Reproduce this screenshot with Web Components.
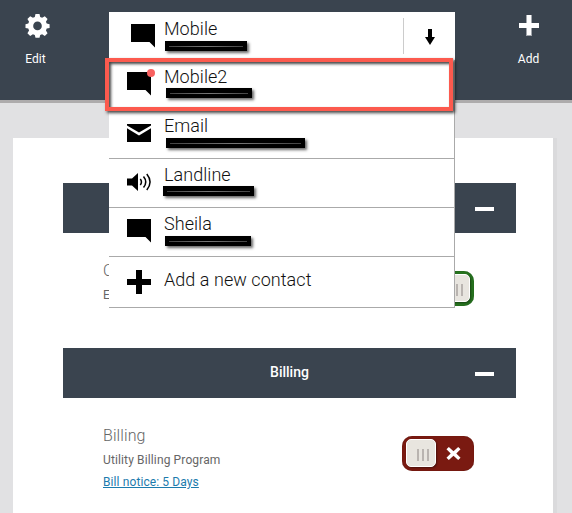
<!DOCTYPE html>
<html lang="en">
<head>
<meta charset="utf-8">
<title>Contacts</title>
<style>
html,body{margin:0;height:513px;overflow:hidden}
body{font-family:Roboto,"Liberation Sans",sans-serif;background:#e1e1e3}
</style>
</head>
<body>
<app-page></app-page>
<script>
const define = (name, html) => customElements.define(name, class extends HTMLElement {
  connectedCallback() {
    if (this.shadowRoot) return;
    const t = document.createElement('template');
    t.innerHTML = typeof html === 'function' ? html(this) : html;
    this.attachShadow({ mode: 'open' }).append(t.content.cloneNode(true));
  }
});

const icons = {
  gear: ['0 0 25 25', '<path fill-rule="evenodd" d="M10.4 0h4.2l.7 3.2 2 .8 2.8-1.7 2.9 2.9-1.7 2.8.8 2 3 .6v3.9l-3 .7-.8 2 1.7 2.8-2.9 2.9-2.8-1.7-2 .8-.7 2.8h-4.2l-.7-2.8-2-.8-2.8 1.7L2 20l1.7-2.8-.8-2-2.9-.7v-3.900l2.900-.6.8-2L2 5.200 4.900 2.300l2.800 1.700 2-.8zM12.500 7.900a4.500 4.500 0 1 0 0 9a4.500 4.500 0 1 0 0-9z"/>'],
  add: ['0 0 20 20', '<path d="M7 0h6v21H7z" fill="#a2a7ad"/><path d="M8 0h4v8h8v5h-8v7H8v-7H0V8h8z"/>'],
  chat: ['0 0 24 24', '<path d="M0 0h24v23.500L18.500 18H0z"/>'],
  mail: ['0 0 24 24', '<path d="M0 3h24v1.500L12 11.500 0 4.500zM0 7.300l12 7.200 12-7.200V21H0z"/>'],
  sound: ['0 0 24 24', '<path d="M0 8.500h5L11 3v18l-6-5.500H0z"/><path d="M13.300 9q2.300 3 0 6M16.500 6.500q4.500 5.500 0 11M19.800 4q6.500 8 0 16" fill="none" stroke="currentColor" stroke-width="1.500"/>'],
  plus: ['0 0 24 24', '<path d="M9 0h6v9h9v6h-9v9H9v-9H0V9h9z"/>'],
  down: ['0 0 10 16', '<path d="M3 0h4v8h3l-5 8-5-8h3z"/>'],
  cross: ['0 0 16 16', '<path d="M3 1l5 4.500L13 1l2.500 2.500L11 8l4.500 4.500L13 15l-5-4.500L3 15 .5 12.500 5 8 .5 3.500z"/>']
};
define('ui-icon', el => {
  const [box, body] = icons[el.getAttribute('name')];
  return `<style>:host{display:block;flex:none}svg{display:block;width:100%;height:100%;overflow:visible;fill:currentColor}</style>
  <svg viewBox="${box}">${body}</svg>`;
});

define('nav-action', `<style>:host{display:flex;flex-direction:column;align-items:center;color:#fff;font-size:12px;line-height:14px}
  ::slotted(span){display:block}</style><slot></slot>`);

define('top-bar', `<style>:host{display:flex;justify-content:space-between;box-sizing:border-box;height:103px;background:#3a444f;border-bottom:3px solid #adabac}
  nav-action{width:71px;padding-top:14px;gap:14px}
  nav-action.r{width:87px;padding-top:15px;gap:17px}
  .gear{width:25px;height:24px;margin-left:3px}.add{width:20px;height:20px}</style>
  <nav-action><ui-icon class="gear" name="gear"></ui-icon><span>Edit</span></nav-action>
  <nav-action class="r"><ui-icon class="add" name="add"></ui-icon><span>Add</span></nav-action>`);

define('section-bar', `<style>:host{display:grid;grid-template-columns:1fr auto 1fr;align-items:center;height:50px;background:#3a444f;color:#fff;font-size:14px;font-weight:500;box-sizing:border-box;padding-right:22px}
  .t{grid-column:2;padding-left:22px;margin-top:-2px}i{grid-column:3;justify-self:end;width:19px;height:4px;background:#fff;margin-top:2px}</style>
  <span class="t"><slot></slot></span><i></i>`);

define('toggle-switch', `<style>:host{display:flex;align-items:center;box-sizing:border-box;width:72px;height:35px;border-radius:10px;background:#7a1a11;padding:3px 13px 4px 4px;justify-content:space-between;box-shadow:inset 0 0 1px #480d08;flex:none}
  :host([on]){background:#27731f;flex-direction:row-reverse;padding:3px 4px 4px 13px;box-shadow:inset 0 0 1px #124b0d}
  .k{box-sizing:border-box;width:30px;height:28px;border-radius:5px;background:#e8e5df;border:1px solid #fff;display:flex;gap:3px;justify-content:center;align-items:center;padding:3px 0 0 4px;box-shadow:1px 1px 2px #0006}
  .k i{width:2px;height:12px;background:#b9b4b0}
  ui-icon{width:15px;height:15px;color:#fff;margin-top:1px}:host([on]) ui-icon{visibility:hidden}</style>
  <span class="k"><i></i><i></i><i></i></span><ui-icon name="cross"></ui-icon>`);

define('program-row', `<style>:host{display:flex;justify-content:space-between;align-items:flex-start;padding:25px 42px 0 40px;height:90px;box-sizing:content-box}
  .x{display:flex;flex-direction:column;color:#666;padding-top:1px}
  ::slotted(b){font-weight:300;font-size:16px;line-height:24px;letter-spacing:.1px}
  ::slotted(span){font-size:12px;line-height:24px;letter-spacing:.13px}
  ::slotted(a){font-size:12px;line-height:20px;letter-spacing:.1px;color:#1c7bad;text-decoration:underline}
  toggle-switch{margin-top:13px}</style>
  <div class="x"><slot></slot></div><slot name="switch"></slot>`);

define('contact-item', el => `<style>:host{display:flex;box-sizing:border-box;height:49px;padding-left:18px;border-bottom:1px solid #aaa;color:#111;background:#fff}
  .i{position:relative;width:24px;height:24px;margin:var(--iy,11px) var(--gap,13px) 0 0;color:#000}
  ui-icon{width:24px;height:24px}
  .dot{position:absolute;left:20px;top:-3px;width:8px;height:8px;border-radius:50%;background:#f8605f}
  .t{padding-top:var(--ty,5px)}
  .n{font-weight:300;font-size:18px;line-height:22px;white-space:nowrap;letter-spacing:var(--ls,.05px)}
  .bar{height:10px;width:${el.getAttribute('bar') || 0}px;margin:var(--by,2px) 0 0 var(--bx,1px);background:linear-gradient(90deg,transparent 4px,#444 4px,#777 50%,#444 calc(100% - 4px),transparent calc(100% - 4px)) 0 5px/100% 1px no-repeat #000;box-shadow:2px 2px 3px #0009}</style>
  <div class="i"><ui-icon name="${el.getAttribute('icon')}"></ui-icon>${el.hasAttribute('dot') ? '<i class="dot"></i>' : ''}</div>
  <div class="t"><div class="n"><slot></slot></div>${el.hasAttribute('bar') ? '<div class="bar"></div>' : ''}</div>`);

define('contact-menu', `<style>:host{position:absolute;left:109px;top:12px;width:346px;height:296px;background:#fff;box-sizing:border-box}
  .head{display:flex;height:48px}
  .head contact-item{flex:1;height:48px;border:0;padding-left:22px;--gap:9px;--iy:12px;--ty:6px;--by:1px}
  .arrow{display:flex;align-items:center;justify-content:center;width:51px;box-sizing:content-box;height:36px;margin-top:6px;border-left:1px solid #ccc}
  .arrow ui-icon{width:10px;height:16px;margin-top:2px}
  .list{border-right:1px solid #aaa}
  .first{border-bottom-color:transparent}
  .ring{position:absolute;left:-4px;top:46px;width:348px;height:53px;box-sizing:border-box;border:4px solid #fc5a4e;box-shadow:2px 2px 3px #000b,inset 2px 2px 3px #000b}</style>
  <div class="head"><contact-item icon="chat" bar="82">Mobile</contact-item><div class="arrow"><ui-icon name="down"></ui-icon></div></div>
  <div class="list">
  <contact-item class="first" icon="chat" dot bar="86" style="--iy:12px;--bx:2px;--ty:6px;--by:0px">Mobile2</contact-item>
  <contact-item style="height:50px;--iy:12px;--ty:6px;--by:1px;--bx:2px" icon="mail" bar="139">Email</contact-item>
  <contact-item style="--iy:11px;--ty:5px;--by:0px;--bx:-1px" icon="sound" bar="91">Landline</contact-item>
  <contact-item style="--iy:11px;--ty:5px;--by:1px;--bx:1px" icon="chat" bar="86">Sheila</contact-item>
  <contact-item style="height:51px;--iy:13px;--ty:12px" icon="plus">Add a new contact</contact-item>
  </div><div class="ring"></div>`);

define('app-page', `<style>:host{display:block;width:572px;height:513px;position:relative;overflow:hidden;background:#e1e1e3}
  main{box-sizing:border-box;margin:35px 15px 0 13px;height:375px;background:#fff;border-right:4px solid #dadadc;padding:45px 37px 0 50px}
  .on,.off{margin-top:13px}</style>
  <top-bar></top-bar>
  <main>
    <section-bar></section-bar>
    <program-row><b>C</b><span>E</span><toggle-switch slot="switch" class="on" on></toggle-switch></program-row>
    <section-bar>Billing</section-bar>
    <program-row><b>Billing</b><span>Utility Billing Program</span><a>Bill notice: 5 Days</a><toggle-switch slot="switch" class="off"></toggle-switch></program-row>
  </main>
  <contact-menu></contact-menu>`);
</script>
</body>
</html>
